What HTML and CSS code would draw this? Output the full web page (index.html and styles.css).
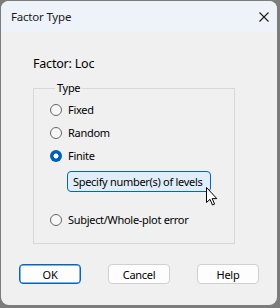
FILE: index.html
```html
<!DOCTYPE html>
<html>
<head>
<meta charset="utf-8">
<link rel="stylesheet" href="styles.css">
</head>
<body>
<div class="window">
  <div class="titlebar">
    <span class="title">Factor Type</span>
    <svg class="close" width="10" height="10" viewBox="0 0 10 10"><path d="M0.5 0.5 L9.5 9.5 M9.5 0.5 L0.5 9.5" stroke="#1b1b1b" stroke-width="1.1" fill="none"/></svg>
  </div>
  <div class="content">
    <div class="factor">Factor: Loc</div>
    <fieldset class="group">
      <legend class="legend">Type</legend>
      <div class="row"><span class="radio"></span><span>Fixed</span></div>
      <div class="row"><span class="radio"></span><span>Random</span></div>
      <div class="row"><span class="radio checked"></span><span>Finite</span></div>
      <div class="sub">
        <div class="spec">Specify number(s) of levels
          <svg class="cursor" width="12" height="19" viewBox="0 0 12 19"><path d="M0.5 0.5 L0.5 15.5 L4 12.3 L6.5 18 L8.6 17.1 L6.2 11.6 L10.8 11.6 Z" fill="#fff" stroke="#000" stroke-width="1" stroke-linejoin="miter"/></svg>
        </div>
      </div>
      <div class="row"><span class="radio"></span><span>Subject/Whole-plot error</span></div>
    </fieldset>
    <div class="buttons">
      <div class="btn default">OK</div>
      <div class="btn">Cancel</div>
      <div class="btn">Help</div>
    </div>
  </div>
</div>
</body>
</html>
```
FILE: styles.css
```css
html, body {
  margin: 0;
  padding: 0;
}
body {
  background: #7c7c7c;
  width: 280px;
  height: 308px;
  overflow: hidden;
  font-family: "Noto Sans", sans-serif;
  font-size: 11px;
  letter-spacing: -0.3px;
  color: #000;
}
.window {
  margin: 1px 0 0 1px;
  width: 276px;
  height: 304px;
  border-radius: 8px;
  background: #f0f0f0;
  overflow: hidden;
}
.titlebar {
  height: 31px;
  background: #eef2f9;
  display: flex;
  align-items: center;
  justify-content: space-between;
  padding: 0 8px 0 10px;
}
.title {
  font-size: 11.5px;
  letter-spacing: -0.2px;
  color: #1a1a1a;
}
.close {
  display: block;
}
.content {
  padding: 23px 42px 0 32px;
}
.factor {
  font-size: 12.5px;
  letter-spacing: -0.2px;
  line-height: 18px;
}
.group {
  margin: 7px 0 0 0;
  padding: 2px 0 12px 16px;
  border: 1px solid #d8d8d8;
  width: 184px;
}
.legend {
  padding: 0 2px;
  margin-left: 5px;
  line-height: 16px;
}
.row {
  display: flex;
  align-items: center;
  height: 23px;
  gap: 6px;
  white-space: nowrap;
}
.radio {
  width: 10px;
  height: 10px;
  border-radius: 50%;
  border: 1px solid #666;
  background: #f7f7f7;
  flex: none;
}
.radio.checked {
  width: 12px;
  height: 12px;
  border: none;
  background: radial-gradient(circle, #fff 0 2.2px, #005fb8 2.8px);
}
.sub {
  padding: 4px 0 16px 17px;
}
.spec {
  position: relative;
  width: 137px;
  height: 19px;
  border: 1px solid #0067c0;
  border-radius: 4px;
  background: #e1eefa;
  display: flex;
  align-items: center;
  padding-left: 5px;
  white-space: nowrap;
}
.cursor {
  position: absolute;
  left: 138px;
  top: 15px;
}
.buttons {
  display: flex;
  justify-content: space-between;
  margin: 20px 0 0 -14px;
  width: 240px;
}
.btn {
  width: 60px;
  height: 18px;
  border: 1px solid #d0d0d0;
  border-radius: 4px;
  background: #fdfdfd;
  display: flex;
  align-items: center;
  justify-content: center;
}
.btn.default {
  border-color: #0067c0;
  box-shadow: inset 0 0 0 0.5px #0067c0;
}
```
